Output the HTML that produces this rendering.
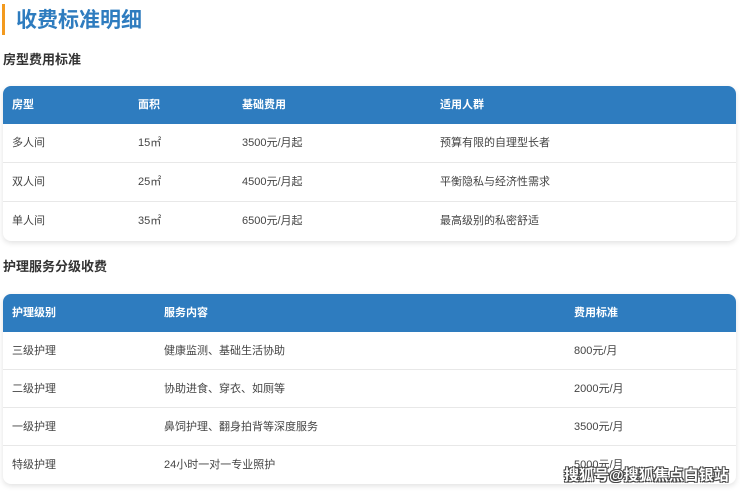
<!DOCTYPE html>
<html><head><meta charset="utf-8"><style>
*{margin:0;padding:0;box-sizing:border-box}
body{width:740px;height:492px;background:#fff;font-family:"Liberation Sans","Noto Sans CJK SC",sans-serif;position:relative;overflow:hidden;color:#333}
.bar{position:absolute;left:2px;top:4px;width:3px;height:31px;background:#f39a1e}
.title{position:absolute;left:16px;top:7px;font-size:21px;font-weight:bold;color:#2e7cbf;line-height:28px}
.sub{position:absolute;left:3px;font-size:13px;font-weight:bold;color:#333;line-height:18px}
.tbl{position:absolute;left:3px;width:733px;border-radius:8px;overflow:hidden;box-shadow:0 2px 6px rgba(0,0,0,0.12);background:#fff}
.row{position:relative;height:39px;border-bottom:1px solid #e8e8e8;font-size:11px;color:#444}
.t2 .row{height:38px}
.row:last-child{border-bottom:none}
.head{background:#2e7cbf;color:#fff;font-weight:bold;height:38px;border-bottom:none}
.row span{position:absolute;top:0;line-height:38px}
.wm{position:absolute;left:564px;top:464px;white-space:nowrap;font-size:15px;font-weight:bold;color:#fff;text-shadow:-1px -1px 0 #444,1px -1px 0 #444,-1px 1px 0 #444,1px 1px 0 #444}
</style></head><body>
<div class="bar"></div>
<div class="title">收费标准明细</div>
<div class="sub" style="top:51px">房型费用标准</div>
<div class="tbl" style="top:86px">
<div class="row head"><span style="left:9px">房型</span><span style="left:135px">面积</span><span style="left:239px">基础费用</span><span style="left:437px">适用人群</span></div>
<div class="row"><span style="left:9px">多人间</span><span style="left:135px">15㎡</span><span style="left:239px">3500元/月起</span><span style="left:437px">预算有限的自理型长者</span></div>
<div class="row"><span style="left:9px">双人间</span><span style="left:135px">25㎡</span><span style="left:239px">4500元/月起</span><span style="left:437px">平衡隐私与经济性需求</span></div>
<div class="row"><span style="left:9px">单人间</span><span style="left:135px">35㎡</span><span style="left:239px">6500元/月起</span><span style="left:437px">最高级别的私密舒适</span></div>
</div>
<div class="sub" style="top:258px">护理服务分级收费</div>
<div class="tbl t2" style="top:294px">
<div class="row head"><span style="left:9px">护理级别</span><span style="left:161px">服务内容</span><span style="left:571px">费用标准</span></div>
<div class="row"><span style="left:9px">三级护理</span><span style="left:161px">健康监测、基础生活协助</span><span style="left:571px">800元/月</span></div>
<div class="row"><span style="left:9px">二级护理</span><span style="left:161px">协助进食、穿衣、如厕等</span><span style="left:571px">2000元/月</span></div>
<div class="row"><span style="left:9px">一级护理</span><span style="left:161px">鼻饲护理、翻身拍背等深度服务</span><span style="left:571px">3500元/月</span></div>
<div class="row"><span style="left:9px">特级护理</span><span style="left:161px">24小时一对一专业照护</span><span style="left:571px">5000元/月</span></div>
</div>
<div class="wm">搜狐号@搜狐焦点白银站</div>
</body></html>
